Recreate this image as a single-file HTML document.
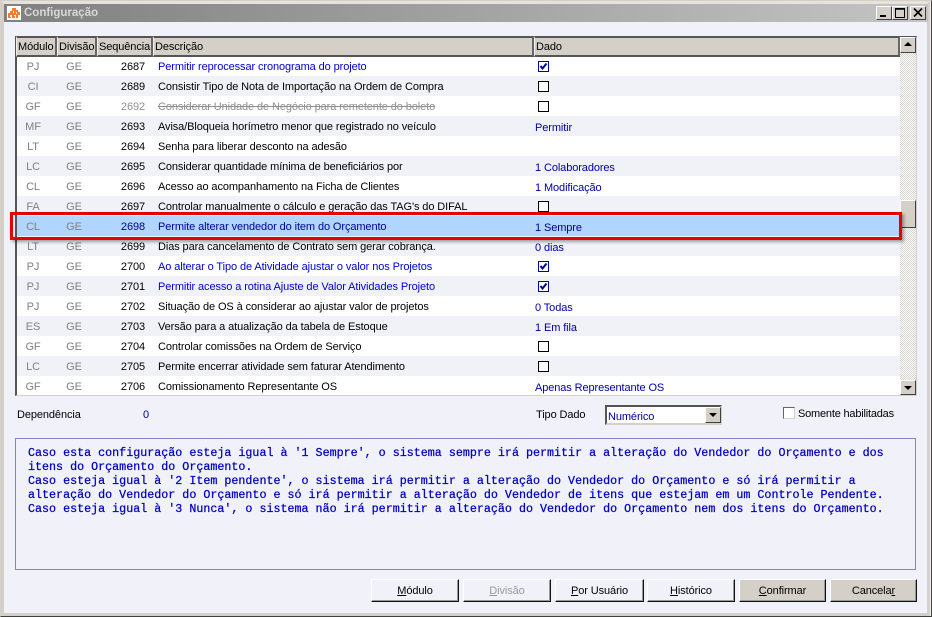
<!DOCTYPE html>
<html lang="pt">
<head>
<meta charset="utf-8">
<title>Configuração</title>
<style>
html,body{margin:0;padding:0;width:932px;height:617px;overflow:hidden;background:#f1f2f9}
*{box-sizing:border-box}
body{font-family:"Liberation Sans",sans-serif;font-size:11px;letter-spacing:-.1px;color:#000;position:relative}
.a{position:absolute;white-space:nowrap}
.frame{position:absolute;left:0;top:0;width:932px;height:617px;border:1px solid #d4d0c8;border-right:1px solid #404040;border-bottom:1px solid #404040}
.frame2{position:absolute;left:1px;top:1px;width:929px;height:615px;border:3px solid #d4d0c8;border-top:3px solid #e6e3dc;}
.title{position:absolute;left:4px;top:4px;width:924px;height:18px;background:linear-gradient(90deg,#808080,#c4c4c4)}
.title b{position:absolute;left:20px;top:3px;color:#d8d8d8;font-size:11.5px;letter-spacing:0}
.ico{position:absolute;left:3px;top:2px;width:14px;height:14px;background:#fff}
.wb{position:absolute;top:6px;width:16px;height:14px;background:#d4d0c8;border:1px solid;border-color:#fff #404040 #404040 #fff}
.hd{position:absolute;top:36px;height:21px;background:#d4d0c8;border-top:2px solid #555;border-bottom:2px solid #555;border-right:2px solid #666;border-left:1px solid #eee;padding:2px 0 0 1px;line-height:14px}
.grid{position:absolute;left:15px;top:36px;width:902px;height:360px;border-left:2px solid #555;border-top:2px solid #555;border-bottom:1px solid #d4d0c8;border-right:1px solid #d4d0c8}
.r{position:absolute;left:17px;width:883px;height:20px;line-height:20px}
.r.o{background:#f1f2f8}.r.w{background:#fff}
.r span{position:absolute;top:1px;white-space:nowrap}
.m{left:0;width:32px;text-align:center;color:#808080}
.d{left:39px;width:36px;text-align:center;color:#808080}
.s{left:64px;width:64px;text-align:right}
.t{left:141px}
.r span.v{left:518px;color:#0000a0;top:2px}
.blue{color:#0000d0}
.gray{color:#909090}
.cb{position:absolute;left:521px;top:5px;width:11px;height:11px;border:1px solid #000;background:#fff}
.cb.c{border-color:#0000a0}
.cb svg{position:absolute;left:0;top:0}
.track{position:absolute;left:900px;top:53px;width:16px;height:327px;background-color:#f0f0f0;background-image:repeating-conic-gradient(#d8d5ce 0 25%,#fff 0 50%);background-size:2px 2px}
.sb{position:absolute;left:900px;width:16px;height:16px;background:#d4d0c8;border:1px solid;border-color:#fff #404040 #404040 #fff}
.btn{position:absolute;top:579px;height:23px;background:#f1f2f9;border:1px solid;border-color:#fff #111 #111 #fff;text-align:center;line-height:23px;box-shadow:inset -1px -1px 0 #999}
.btn.g{background:#d4d0c8}
.btn u{text-decoration:underline}
.memo{position:absolute;left:15px;top:438px;width:901px;height:132px;border:1px solid #8484c0;font-family:"Liberation Mono",monospace;font-size:11.69px;letter-spacing:0;line-height:14px;color:#0000c0;padding:7px 0 0 12px;white-space:pre;-webkit-text-stroke:0.25px #0000c0}
.hl{position:absolute;left:10px;top:212px;width:892px;height:28px;border:3px solid #e60000;box-shadow:2px 2px 3px rgba(0,0,0,.35);}
</style>
</head>
<body>
<div class="frame"></div>
<div class="frame2"></div>
<div class="title">
  <div class="ico"><svg width="14" height="14" viewBox="0 0 14 14"><path d="M5 2h4v2h2v2h2v3h-2v3H9V9H8v3H5V9H4v3H1V7h2V5h2z" fill="#f47a30"/><path d="M6 5h1v2H6zM9 6h1v2H9zM3 9h1v2H3zM7 9h1v1H7z" fill="#fff"/></svg></div>
  <b>Configuração</b>
</div>
<div class="wb" style="left:876px"><svg width="14" height="12" style="position:absolute;left:0;top:0"><rect x="3" y="8" width="6" height="2" fill="#000"/></svg></div>
<div class="wb" style="left:892px"><svg width="14" height="12" style="position:absolute;left:0;top:0"><path d="M2.5 1.5h9v9h-9z" fill="none" stroke="#000"/><path d="M2 2h10" stroke="#000" stroke-width="1.5"/></svg></div>
<div class="wb" style="left:910px"><svg width="14" height="12" style="position:absolute;left:0;top:0"><path d="M3 1.5l8 8M11 1.5l-8 8" stroke="#000" stroke-width="1.6"/></svg></div>

<div class="grid"></div>
<div class="hd" style="left:16px;width:41px">Módulo</div>
<div class="hd" style="left:57px;width:40px">Divisão</div>
<div class="hd" style="left:97px;width:56px">Sequência</div>
<div class="hd" style="left:153px;width:381px">Descrição</div>
<div class="hd" style="left:534px;width:366px">Dado</div>

<div class="r w" style="top:57px;height:19px"><span class="m" style="top:0">PJ</span><span class="d" style="top:0">GE</span><span class="s" style="top:0">2687</span><span class="t blue" style="top:0">Permitir reprocessar cronograma do projeto</span><i class="cb c" style="top:4px"><svg width="9" height="9"><path d="M1.5 4l2 2.5L7.5 1.5" fill="none" stroke="#0000a0" stroke-width="2"/></svg></i></div>
<div class="r o" style="top:76px"><span class="m">CI</span><span class="d">GE</span><span class="s">2689</span><span class="t">Consistir Tipo de Nota de Importação na Ordem de Compra</span><i class="cb"></i></div>
<div class="r w" style="top:96px"><span class="m">GF</span><span class="d">GE</span><span class="s gray">2692</span><span class="t gray" style="text-decoration:line-through">Considerar Unidade de Negócio para remetente do boleto</span><i class="cb"></i></div>
<div class="r o" style="top:116px"><span class="m">MF</span><span class="d">GE</span><span class="s">2693</span><span class="t">Avisa/Bloqueia horímetro menor que registrado no veículo</span><span class="v">Permitir</span></div>
<div class="r w" style="top:136px"><span class="m">LT</span><span class="d">GE</span><span class="s">2694</span><span class="t">Senha para liberar desconto na adesão</span></div>
<div class="r o" style="top:156px"><span class="m">LC</span><span class="d">GE</span><span class="s">2695</span><span class="t">Considerar quantidade mínima de beneficiários por</span><span class="v">1 Colaboradores</span></div>
<div class="r w" style="top:176px"><span class="m">CL</span><span class="d">GE</span><span class="s">2696</span><span class="t">Acesso ao acompanhamento na Ficha de Clientes</span><span class="v">1 Modificação</span></div>
<div class="r o" style="top:196px"><span class="m">FA</span><span class="d">GE</span><span class="s">2697</span><span class="t">Controlar manualmente o cálculo e geração das TAG's do DIFAL</span><i class="cb"></i></div>
<div class="r" style="top:216px;background:#b0d6ff"><span class="m">CL</span><span class="d">GE</span><span class="s" style="color:#000080">2698</span><span class="t" style="color:#000090">Permite alterar vendedor do item do Orçamento</span><span class="v" style="color:#000080">1 Sempre</span></div>
<div class="r o" style="top:236px"><span class="m">LT</span><span class="d">GE</span><span class="s">2699</span><span class="t">Dias para cancelamento de Contrato sem gerar cobrança.</span><span class="v">0 dias</span></div>
<div class="r w" style="top:256px"><span class="m">PJ</span><span class="d">GE</span><span class="s">2700</span><span class="t blue">Ao alterar o Tipo de Atividade ajustar o valor nos Projetos</span><i class="cb c"><svg width="9" height="9"><path d="M1.5 4l2 2.5L7.5 1.5" fill="none" stroke="#0000a0" stroke-width="2"/></svg></i></div>
<div class="r o" style="top:276px"><span class="m">PJ</span><span class="d">GE</span><span class="s">2701</span><span class="t blue">Permitir acesso a rotina Ajuste de Valor Atividades Projeto</span><i class="cb c"><svg width="9" height="9"><path d="M1.5 4l2 2.5L7.5 1.5" fill="none" stroke="#0000a0" stroke-width="2"/></svg></i></div>
<div class="r w" style="top:296px"><span class="m">PJ</span><span class="d">GE</span><span class="s">2702</span><span class="t">Situação de OS à considerar ao ajustar valor de projetos</span><span class="v">0 Todas</span></div>
<div class="r o" style="top:316px"><span class="m">ES</span><span class="d">GE</span><span class="s">2703</span><span class="t">Versão para a atualização da tabela de Estoque</span><span class="v">1 Em fila</span></div>
<div class="r w" style="top:336px"><span class="m">GF</span><span class="d">GE</span><span class="s">2704</span><span class="t">Controlar comissões na Ordem de Serviço</span><i class="cb"></i></div>
<div class="r o" style="top:356px"><span class="m">LC</span><span class="d">GE</span><span class="s">2705</span><span class="t">Permite encerrar atividade sem faturar Atendimento</span><i class="cb"></i></div>
<div class="r w" style="top:376px;height:19px"><span class="m">GF</span><span class="d">GE</span><span class="s">2706</span><span class="t">Comissionamento Representante OS</span><span class="v">Apenas Representante OS</span></div>

<div class="track"></div>
<div class="sb" style="top:37px"><svg width="14" height="14" style="position:absolute;left:0;top:0"><path d="M7 4l-4 4h8z" fill="#000"/></svg></div>
<div class="sb" style="top:200px;height:28px"></div>
<div class="sb" style="top:380px;height:15px"><svg width="14" height="13" style="position:absolute;left:0;top:0"><path d="M3 5h8l-4 4z" fill="#000"/></svg></div>

<div class="hl"></div>

<div class="a" style="left:17px;top:409px">Dependência</div>
<div class="a" style="left:143px;top:409px;color:#0000a0">0</div>
<div class="a" style="left:536px;top:409px">Tipo Dado</div>
<div class="a" style="left:605px;top:405px;width:117px;height:20px;background:#fff;border:2px solid;border-color:#555 #d4d0c8 #d4d0c8 #555;color:#0000a0;padding:3px 0 0 1px;line-height:15px">Numérico</div>
<div class="sb" style="left:705px;top:407px;width:16px;height:16px"><svg width="14" height="14" style="position:absolute;left:0;top:0"><path d="M3 5h8l-4 4z" fill="#000"/></svg></div>
<div class="a" style="left:783px;top:407px;width:12px;height:12px;background:#fff;border:1px solid #666;border-right-color:#d4d0c8;border-bottom-color:#d4d0c8"></div>
<div class="a" style="left:798px;top:408px;letter-spacing:-.2px">Somente habilitadas</div>

<div class="memo">Caso esta configuração esteja igual à '1 Sempre', o sistema sempre irá permitir a alteração do Vendedor do Orçamento e dos
itens do Orçamento do Orçamento.
Caso esteja igual à '2 Item pendente', o sistema irá permitir a alteração do Vendedor do Orçamento e só irá permitir a
alteração do Vendedor do Orçamento e só irá permitir a alteração do Vendedor de itens que estejam em um Controle Pendente.
Caso esteja igual à '3 Nunca', o sistema não irá permitir a alteração do Vendedor do Orçamento nem dos itens do Orçamento.</div>

<div class="btn" style="left:371px;width:88px"><u>M</u>ódulo</div>
<div class="btn" style="left:463px;width:88px;color:#999"><u>D</u>ivisão</div>
<div class="btn" style="left:555px;width:89px"><u>P</u>or Usuário</div>
<div class="btn" style="left:647px;width:88px"><u>H</u>istórico</div>
<div class="btn g" style="left:739px;width:87px"><u>C</u>onfirmar</div>
<div class="btn g" style="left:830px;width:87px">Cancela<u>r</u></div>
</body>
</html>
